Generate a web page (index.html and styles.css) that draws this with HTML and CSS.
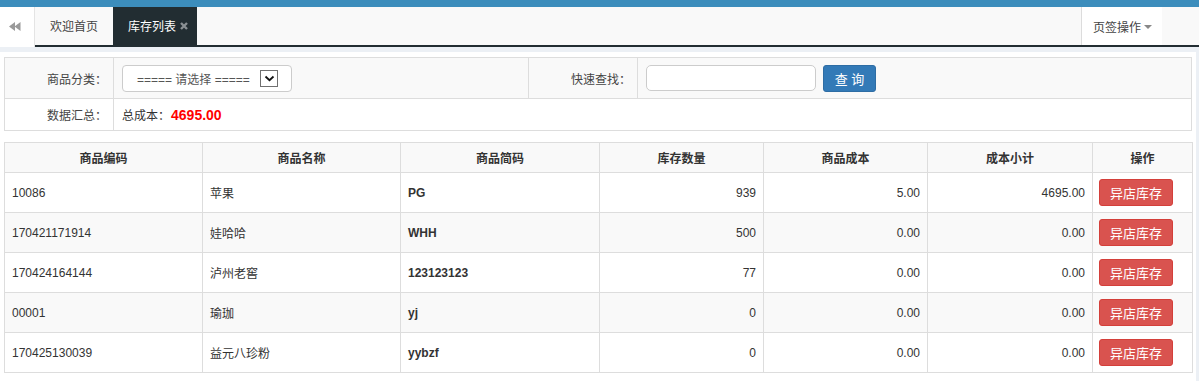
FILE: index.html
```html
<!DOCTYPE html>
<html lang="zh-CN">
<head>
<meta charset="utf-8">
<title>库存列表</title>
<link rel="stylesheet" href="styles.css">
</head>
<body>
<div class="topbar"></div>
<div class="tabbar">
  <div class="tab-back">
    <svg width="12" height="9" viewBox="0 0 12 9"><polygon points="0,4.5 6,0 6,9" fill="#9a9a9a"/><polygon points="5.5,4.5 11.5,0 11.5,9" fill="#9a9a9a"/></svg>
  </div>
  <div class="tabs">
    <div class="tab">欢迎首页</div>
    <div class="tab tab-active">库存列表 <svg class="tab-close" width="8" height="8" viewBox="0 0 8 8"><path d="M1 1L7 7M7 1L1 7" stroke="#8a8f93" stroke-width="2.4"/></svg></div>
    <div class="tabs-fill"></div>
    <div class="tab-ops">页签操作 <span class="caret"></span></div>
  </div>
</div>
<div class="content">
  <table class="filter">
    <colgroup><col style="width:109px"><col style="width:415px"><col style="width:109px"><col></colgroup>
    <tr class="frow1">
      <td class="flabel">商品分类<span class="colon">：</span></td>
      <td>
        <div class="select"><span class="select-text">===== 请选择 =====</span><span class="select-arrow"><svg width="11" height="7" viewBox="0 0 11 7"><path d="M1.5 1.5L5.5 5.2L9.5 1.5" fill="none" stroke="#111" stroke-width="1.8"/></svg></span></div>
      </td>
      <td class="flabel">快速查找<span class="colon">：</span></td>
      <td><div class="search"><div class="input"></div><div class="btn-query">查 询</div></div></td>
    </tr>
    <tr class="frow2">
      <td class="flabel">数据汇总<span class="colon">：</span></td>
      <td colspan="3">总成本<span class="colon">：</span><span class="total">4695.00</span></td>
    </tr>
  </table>
  <table class="grid">
    <colgroup><col style="width:198px"><col style="width:198px"><col style="width:199px"><col style="width:164px"><col style="width:164px"><col style="width:165px"><col style="width:100px"></colgroup>
    <tr class="head"><th>商品编码</th><th>商品名称</th><th>商品简码</th><th>库存数量</th><th>商品成本</th><th>成本小计</th><th>操作</th></tr>
    <tr><td>10086</td><td>苹果</td><td class="b">PG</td><td class="r">939</td><td class="r">5.00</td><td class="r">4695.00</td><td class="op"><span class="btn-red">异店库存</span></td></tr>
    <tr class="alt"><td>170421171914</td><td>娃哈哈</td><td class="b">WHH</td><td class="r">500</td><td class="r">0.00</td><td class="r">0.00</td><td class="op"><span class="btn-red">异店库存</span></td></tr>
    <tr><td>170424164144</td><td>泸州老窖</td><td class="b">123123123</td><td class="r">77</td><td class="r">0.00</td><td class="r">0.00</td><td class="op"><span class="btn-red">异店库存</span></td></tr>
    <tr class="alt"><td>00001</td><td>瑜珈</td><td class="b">yj</td><td class="r">0</td><td class="r">0.00</td><td class="r">0.00</td><td class="op"><span class="btn-red">异店库存</span></td></tr>
    <tr><td>170425130039</td><td>益元八珍粉</td><td class="b">yybzf</td><td class="r">0</td><td class="r">0.00</td><td class="r">0.00</td><td class="op"><span class="btn-red">异店库存</span></td></tr>
  </table>
</div>
</body>
</html>
```
FILE: styles.css
```css
html, body {
  margin: 0;
  padding: 0;
}
body {
  background: #ecf0f5;
  font-family: "Liberation Sans", Arial, "Noto Sans CJK SC", sans-serif;
  font-size: 12px;
  color: #333;
  width: 1199px;
  height: 381px;
  overflow: hidden;
}
.topbar {
  height: 7px;
  background: #3c8dbc;
}
.tabbar {
  display: flex;
  height: 40px;
}
.tab-back {
  width: 35px;
  height: 40px;
  background: #fff;
  border-right: 1px solid #e4e4e4;
  box-sizing: border-box;
  display: flex;
  align-items: center;
  justify-content: center;
  padding-bottom: 2px;
  padding-right: 4px;
}
.tabs {
  flex: 1;
  display: flex;
  height: 38px;
  background: #f9f9f9;
  border-bottom: 2px solid #222d32;
}
.tab {
  width: 78px;
  display: flex;
  align-items: center;
  justify-content: center;
  color: #444;
  padding-bottom: 1px;
  box-sizing: border-box;
}
.tab-active {
  width: 84px;
  background: #222d32;
  color: #fff;
  justify-content: flex-start;
  padding-left: 15px;
}
.tab-close {
  margin-left: 4px;
  margin-top: 1px;
}
.tabs-fill {
  flex: 1;
}
.tab-ops {
  width: 81px;
  background: #fff;
  border-left: 1px solid #dcdcdc;
  display: flex;
  align-items: center;
  padding-left: 11px;
  box-sizing: border-box;
  color: #444;
  margin-right: 37px;
}
.caret {
  display: inline-block;
  width: 0;
  height: 0;
  border-left: 4px solid transparent;
  border-right: 4px solid transparent;
  border-top: 4px solid #888;
  margin-left: 3px;
  margin-top: 2px;
}
.content {
  margin-top: 5px;
  width: 1196px;
  background: #fff;
  padding: 5px 4px 10px;
  box-sizing: border-box;
}
table {
  border-collapse: collapse;
  table-layout: fixed;
  width: 1188px;
}
.filter td {
  border: 1px solid #ddd;
  padding: 0 8px;
  vertical-align: middle;
}
.frow1 {
  height: 41px;
  background: #f9f9f9;
}
.frow2 {
  height: 32px;
  background: #fff;
}
.flabel {
  text-align: right;
  color: #444;
}
.filter td.flabel {
  padding-right: 6px;
}
.colon {
  font-family: "Noto Sans CJK TC", "Noto Sans CJK SC", sans-serif;
}
.select {
  width: 170px;
  height: 27px;
  border: 1px solid #ccc;
  border-radius: 4px;
  background: #fff;
  box-sizing: border-box;
  display: flex;
  align-items: center;
  padding-left: 14px;
  color: #555;
}
.select-text {
  flex: 1;
}
.select-arrow {
  width: 18px;
  height: 17px;
  border: 1px solid #707070;
  box-sizing: border-box;
  background: #fff;
  margin-right: 13px;
  display: flex;
  align-items: center;
  justify-content: center;
}
.search {
  display: flex;
  align-items: center;
  gap: 7px;
}
.input {
  width: 170px;
  height: 26px;
  border: 1px solid #ccc;
  border-radius: 5px;
  background: #fff;
  box-sizing: border-box;
}
.btn-query {
  width: 53px;
  height: 27px;
  background: #337ab7;
  border: 1px solid #2e6da4;
  border-radius: 3px;
  color: #fff;
  font-size: 13px;
  display: flex;
  align-items: center;
  justify-content: center;
  box-sizing: border-box;
}
.total {
  color: #f00;
  font-weight: bold;
  font-size: 14px;
  margin-left: 1px;
}
.grid {
  margin-top: 11px;
}
.grid th, .grid td {
  border: 1px solid #ddd;
  padding: 0 7px;
  vertical-align: middle;
  white-space: nowrap;
  overflow: hidden;
}
.head {
  height: 30px;
  background: #f9f9f9;
}
.grid th {
  font-weight: bold;
  text-align: center;
  color: #333;
}
.grid tr {
  height: 40px;
}
.grid tr.head {
  height: 30px;
}
.grid tr.alt {
  background: #f9f9f9;
}
.grid td.r {
  text-align: right;
}
.grid td.b {
  font-weight: bold;
}
.grid td.op {
  padding-left: 6px;
}
.btn-red {
  display: inline-flex;
  align-items: center;
  justify-content: center;
  width: 74px;
  height: 27px;
  background: #d9534f;
  border: 1px solid #d43f3a;
  border-radius: 3px;
  color: #fff;
  font-size: 13px;
  box-sizing: border-box;
  vertical-align: middle;
}
```
